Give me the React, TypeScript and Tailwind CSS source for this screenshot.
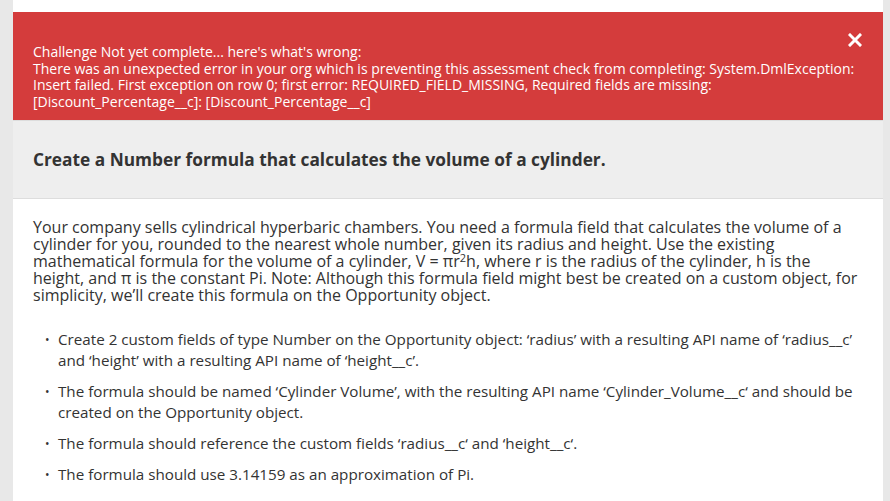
import React from "react";

export default function App() {
  const items: React.ReactNode[] = [
    <>Create 2 custom fields of type Number on the Opportunity object: ‘radius’ with a resulting API name of ‘radius__c’ and ‘height’ with a resulting API name of ‘height__c’.</>,
    <>The formula should be named ‘Cylinder Volume’, with the resulting API name ‘Cylinder_Volume__c‘ and should be created on the Opportunity object.</>,
    <>The formula should reference the custom fields ‘radius__c‘ and ‘height__c‘.</>,
    <>The formula should use 3.14159 as an approximation of Pi.</>,
  ];
  return (
    <div className="w-[890px] h-[501px] overflow-hidden bg-[#e8e8e8] flex font-['Open_Sans',sans-serif]">
      <div className="ml-[13px] w-[870px] h-full bg-white pt-[12px]">
        <div className="relative h-[108px] bg-[#d43c3c] pl-[20px] pr-[12px] pt-[32px] text-white text-[14px] leading-[16.7px]">
          <div>Challenge Not yet complete... here's what's wrong:</div>
          <div>
            There was an unexpected error in your org which is preventing this assessment check from completing: System.DmlException: Insert failed. First exception on row 0; first error: REQUIRED_FIELD_MISSING, Required fields are missing: [Discount_Percentage__c]: [Discount_Percentage__c]
          </div>
          <svg className="absolute left-[835px] top-[21px]" width="14" height="14" viewBox="0 0 14 14">
            <path d="M2 2 L12 12 M12 2 L2 12" stroke="white" strokeWidth="3" strokeLinecap="square" />
          </svg>
        </div>
        <div className="h-[79px] bg-[#eeeeee] border-t border-b border-[#dddddd] px-[20px] flex items-center">
          <h2 className="text-[17.3px] font-bold text-[#333333]">
            Create a Number formula that calculates the volume of a cylinder.
          </h2>
        </div>
        <div className="px-[20px] pt-[20px] text-[#333333]">
          <p className="text-[16px] leading-[17px]">
            Your company sells cylindrical hyperbaric chambers. You need a formula field that calculates the volume of a cylinder for you, rounded to the nearest whole number, given its radius and height. Use the existing mathematical formula for the volume of a cylinder, V = πr<sup className="text-[11px] leading-none">2</sup>h, where r is the radius of the cylinder, h is the height, and π is the constant Pi. Note: Although this formula field might best be created on a custom object, for simplicity, we’ll create this formula on the Opportunity object.
          </p>
          <ul className="mt-[25px] flex flex-col gap-[10px]">
            {items.map((it, i) => (
              <li key={i} className="flex text-[15.2px] leading-[21px]">
                <span className="w-[25px] shrink-0 pl-[12px] text-[12px]">•</span>
                <span className="pr-[2px]">{it}</span>
              </li>
            ))}
          </ul>
        </div>
      </div>
    </div>
  );
}
